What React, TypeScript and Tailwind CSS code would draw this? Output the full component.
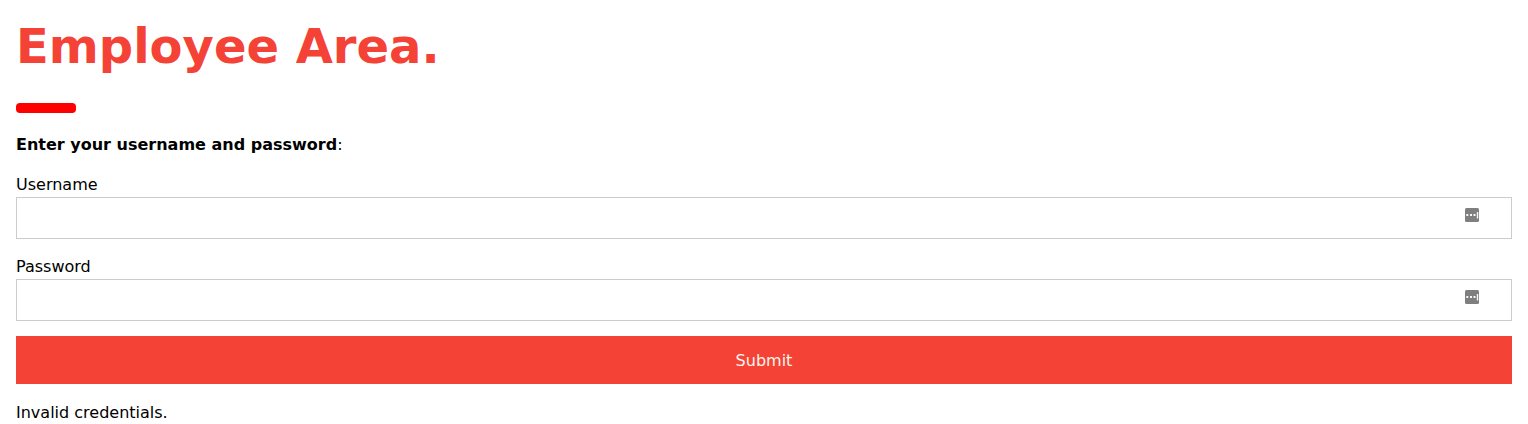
function AutofillIcon() {
  return (
    <svg width="14" height="14" viewBox="0 0 14 14" aria-hidden="true">
      <rect width="14" height="14" rx="1.5" fill="#7f7f7f" />
      <rect x="1.3" y="6" width="2" height="2" fill="#f7f7f7" />
      <rect x="5" y="6" width="2" height="2" fill="#f7f7f7" />
      <rect x="8.5" y="6" width="2" height="2" fill="#f7f7f7" />
      <rect x="11.8" y="4" width="1.4" height="6.5" fill="#f7f7f7" />
    </svg>
  );
}

function Field({ label, type }: { label: string; type: string }) {
  return (
    <label className="block">
      <span className="block h-6">{label}</span>
      <span className="flex h-[42px] border border-[#ccc] bg-white">
        <input type={type} className="min-w-0 flex-1 px-2 outline-none" />
        <span className="mr-8 pt-[10px]">
          <AutofillIcon />
        </span>
      </span>
    </label>
  );
}

export default function App() {
  return (
    <main className="h-[424px] overflow-hidden bg-white px-4 font-['DejaVu_Sans',sans-serif] text-base leading-6 text-black">
      <h1 className="pt-[10px] text-[48px] leading-[72px] font-bold text-[#f44336]">Employee Area.</h1>
      <div className="mt-[21px] h-[10px] w-[60px] rounded-[4px] bg-[#ff0000]" />
      <p className="mt-5">
        <b>Enter your username and password</b>:
      </p>
      <form className="mt-4" onSubmit={(e) => e.preventDefault()}>
        <Field label="Username" type="text" />
        <div className="mt-4">
          <Field label="Password" type="password" />
        </div>
        <button className="mt-[15px] block h-12 w-full bg-[#f44336] pt-0.5 text-[#fff5ec]">Submit</button>
      </form>
      <p className="mt-[17px]">Invalid credentials.</p>
    </main>
  );
}
